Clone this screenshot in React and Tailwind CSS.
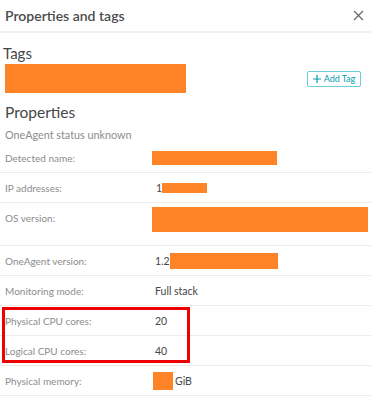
import React from "react";

const ORANGE = "bg-[#ff8427]";

function Row({ label, children, tall }) {
  return (
    <div
      className={
        "flex border-b border-[#ececec] " +
        (tall ? "h-[43px] items-start pt-[8px]" : "h-[30px] items-center")
      }
    >
      <div className="w-[150px] shrink-0 pl-[5px] text-[10px] leading-[14px] text-[#8c8c8c]">
        {label}
      </div>
      <div className="flex flex-1 items-center text-[10.5px] leading-[14px] text-[#454646]">
        {children}
      </div>
    </div>
  );
}

export default function App() {
  return (
    <div
      className="relative w-[371px] h-[400px] overflow-hidden bg-white"
      style={{ fontFamily: "Lato, 'Noto Sans', sans-serif" }}
    >
      <div className="flex h-[33px] items-center justify-between border-b-2 border-[#f0f0f0] pl-[5px] pr-[4px]">
        <div className="text-[14px] font-semibold text-[#4b4b4b]">Properties and tags</div>
        <svg width="11" height="11" viewBox="0 0 11 11" className="mr-[3px]">
          <path d="M1 1 L10 10 M10 1 L1 10" stroke="#6b6b6b" strokeWidth="1.3" />
        </svg>
      </div>

      <div className="mt-[10px] pl-[3px] text-[15px] leading-[20px] text-[#454646]">Tags</div>
      <div className="mt-[1px] flex h-[29px] items-center justify-between pl-[5px] pr-[10px]">
        <div className={"h-[29px] w-[181px] " + ORANGE} />
        <button className="flex h-[16px] w-[54px] items-center justify-center gap-[3px] rounded-[2px] border border-[#6ccdd5] text-[9px] text-[#00a1b2]">
          <svg width="8" height="8" viewBox="0 0 8 8">
            <path d="M4 0 V8 M0 4 H8" stroke="#00a1b2" strokeWidth="1.2" />
          </svg>
          Add Tag
        </button>
      </div>

      <div className="mt-[8px] pl-[5px] text-[15.5px] leading-[22px] text-[#454646]">Properties</div>
      <div className="mt-[4px] pl-[5px] text-[10.8px] leading-[16px] text-[#8c8c8c]">
        OneAgent status unknown
      </div>

      <div>
        <Row label="Detected name:">
          <div className={"ml-[2px] h-[14px] w-[125px] " + ORANGE} />
        </Row>
        <Row label="IP addresses:">
          <span className="ml-[6px]">1</span>
          <div className={"h-[10px] w-[45px] " + ORANGE} />
        </Row>
        <Row label="OS version:" tall>
          <div className={"ml-[2px] -mt-[4px] h-[25px] w-[216px] " + ORANGE} />
        </Row>
        <Row label="OneAgent version:">
          <span className="ml-[5px]">1.2</span>
          <div className={"h-[16px] w-[108px] " + ORANGE} />
        </Row>
        <Row label="Monitoring mode:">
          <span className="ml-[5px]">Full stack</span>
        </Row>
        <Row label="Physical CPU cores:">
          <span className="ml-[5px]">20</span>
        </Row>
        <Row label="Logical CPU cores:">
          <span className="ml-[5px]">40</span>
        </Row>
        <Row label="Physical memory:">
          <div className={"ml-[3px] h-[18px] w-[20px] " + ORANGE} />
          <span className="ml-[2px]">GiB</span>
        </Row>
      </div>

      <div className="absolute left-[2px] top-[307px] h-[56px] w-[188px] border-[3px] border-[#f00000]" />
    </div>
  );
}
